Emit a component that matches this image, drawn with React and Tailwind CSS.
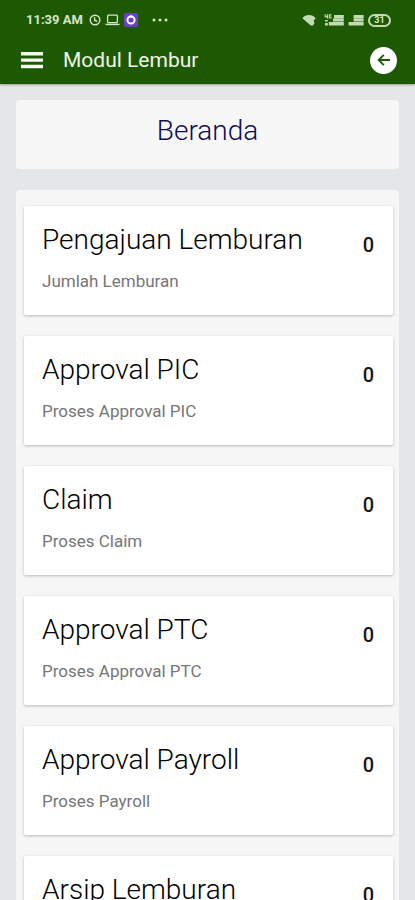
import React from "react";

const menus = [
  { title: "Pengajuan Lemburan", subtitle: "Jumlah Lemburan", total: 0 },
  { title: "Approval PIC", subtitle: "Proses Approval PIC", total: 0 },
  { title: "Claim", subtitle: "Proses Claim", total: 0 },
  { title: "Approval PTC", subtitle: "Proses Approval PTC", total: 0 },
  { title: "Approval Payroll", subtitle: "Proses Payroll", total: 0 },
  { title: "Arsip Lemburan", subtitle: "Arsip Lemburan", total: 0 },
];

const StatusBar = () => (
  <div className="flex h-10 items-center justify-between pl-[26px] pr-6 text-[#d5e6c8]">
    <div className="flex items-center">
      <span className="text-[13px] font-bold leading-4">11:39 AM</span>
      {/* Alarm clock */}
      <svg className="ml-1.5 h-3 w-3" viewBox="0 0 12 12" fill="none" stroke="currentColor" strokeWidth="1.4">
        <circle cx="6" cy="6" r="4.8" />
        <path d="M5.6 3.2v3l2.6 1.2" />
      </svg>
      {/* Laptop */}
      <svg className="ml-1 h-3 w-[15px]" viewBox="0 0 15 12" fill="none" stroke="currentColor" strokeWidth="1.3">
        <rect x="2.6" y="1.2" width="9.8" height="7.4" rx="0.8" />
        <path d="M0.5 10.4h14" strokeWidth="1.5" />
      </svg>
      {/* App notification */}
      <svg className="ml-1 h-[14px] w-[14px]" viewBox="0 0 14 14">
        <rect width="14" height="14" rx="2" fill="#6a3fc4" />
        <circle cx="7" cy="7" r="3.6" fill="none" stroke="#fff" strokeWidth="2" />
        <path d="M5.4 2.6h3.2L7 5z" fill="#fff" />
      </svg>
      <svg className="ml-3.5 h-1 w-4" viewBox="0 0 16 4" fill="currentColor">
        <circle cx="2" cy="2" r="1.5" />
        <circle cx="8" cy="2" r="1.5" />
        <circle cx="14" cy="2" r="1.5" />
      </svg>
    </div>

    <div className="flex items-center">
      {/* Wifi */}
      <svg className="h-3 w-[14px]" viewBox="0 0 15 12" fill="#c3dbb4">
        <path d="M0.4 4C3.6-0.4 11.4-0.4 14.6 4L12.4 6.8l1 2.4-1.6 2.6H9.4z" />
      </svg>
      {/* Signal with 4G label */}
      <svg className="ml-2 h-3 w-5" viewBox="0 0 20 12" fill="#c3dbb4">
        <path d="M0.6 0.2h1.2v1.8h1V0.2h1.2v4.4H2.8V3.2H0.6zM4.8 0.2h2.6v1.2H6v2h.6V2.6h1v2H4.8z" />
        <path d="M1 6h2.8v1.6H1zM1 9h2.8v2.4H1z" />
        <path d="M10 1h9.8v3.2H10zM9 4.6h10.8v3H9zM4.8 8h15v3.4h-15z" />
      </svg>
      {/* Signal */}
      <svg className="ml-1 h-3 w-4" viewBox="0 0 16 12" fill="#c3dbb4">
        <path d="M5.6 1h10v3.2h-10zM5.6 4.6h10v3h-10zM0.6 8h15v3.4h-15z" />
      </svg>
      {/* Battery */}
      <span className="ml-1 flex h-[13px] w-[23px] items-center justify-center rounded-full border-2 border-[#c3dbb4] text-[9px] font-bold leading-none">
        31
      </span>
    </div>
  </div>
);

const Toolbar = () => (
  <div className="flex h-11 items-center justify-between pb-1 pl-[21px] pr-[18px]">
    <div className="flex items-center gap-5">
      <button type="button" aria-label="Menu" className="block">
        <svg className="h-[18px] w-[22px]" viewBox="0 0 22 18" fill="#f6fbf2">
          <path d="M0 1h22v3.4H0zM0 7.4h22v3.4H0zM0 13.8h22v3.4H0z" />
        </svg>
      </button>
      <h1 className="text-[21px] leading-7 text-[#eef6e8]">Modul Lembur</h1>
    </div>
    <button
      type="button"
      aria-label="Kembali"
      className="flex h-[27px] w-[27px] items-center justify-center rounded-full bg-white"
    >
      <svg className="h-[14px] w-[14px]" viewBox="0 0 14 14" fill="none" stroke="#1c5a06" strokeWidth="1.8">
        <path d="M13 7H2M6.8 1.8L1.6 7l5.2 5.2" />
      </svg>
    </button>
  </div>
);

const MenuCard = ({ title, subtitle, total }) => (
  <article className="flex h-[109px] items-start justify-between rounded-xs bg-white pl-[18px] pr-[19px] pt-4 shadow-[0_1px_3px_rgba(0,0,0,0.25)]">
    <div>
      <h3 className="text-[28px] font-light leading-9 text-black">{title}</h3>
      <p className="mt-[11px] text-[17px] leading-6 text-[#767676]">{subtitle}</p>
    </div>
    <span className="mt-[9px] text-[20px] font-medium leading-7 text-[#161616]">{total}</span>
  </article>
);

const App = () => {
  return (
    <div className="flex h-screen flex-col bg-[#e4e6e8] font-['Roboto',sans-serif]">
      <header className="shrink-0 bg-[#1d5902] shadow-[0_1px_2px_rgba(0,0,0,0.35)]">
        <StatusBar />
        <Toolbar />
      </header>

      <main className="flex-1 overflow-y-auto px-4 py-4 [scrollbar-width:none]">
        <div className="rounded-sm bg-[#f7f7f8] pb-5 pt-[13px]">
          <h2 className="text-center text-[28px] font-light leading-9 text-[#0e0a55]">Beranda</h2>
        </div>

        <section className="mt-[21px] flex flex-col gap-[21px] rounded-sm bg-[#f6f6f7] py-4 pl-2 pr-1.5">
          {menus.map((menu) => (
            <MenuCard key={menu.title} {...menu} />
          ))}
        </section>
      </main>
    </div>
  );
};

export default App;
